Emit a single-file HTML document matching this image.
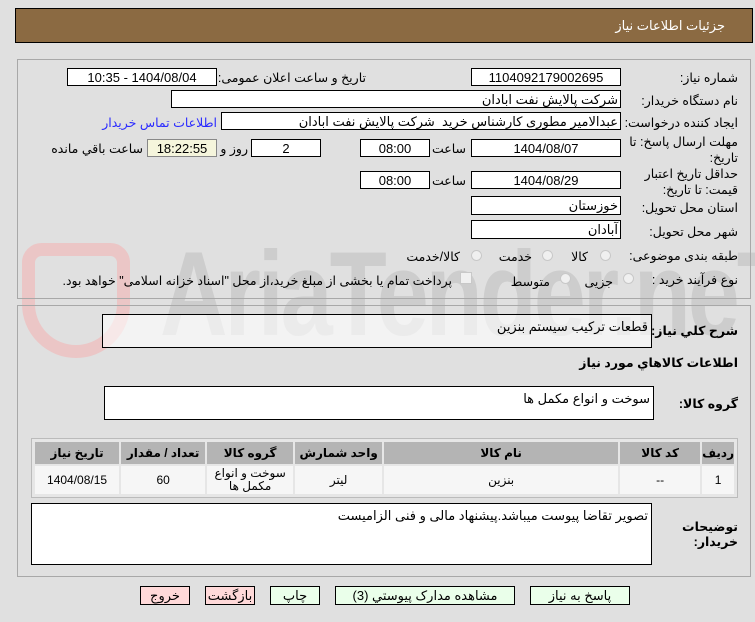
<!DOCTYPE html>
<html><head><meta charset="utf-8"><style>
*{box-sizing:border-box;margin:0;padding:0}
body{width:755px;height:622px;background:#e0e0e0;font-family:"Liberation Sans","DejaVu Sans",sans-serif;font-size:12px;color:#000;position:relative;overflow:hidden;direction:rtl}
.a{position:absolute;white-space:nowrap}
.box{position:absolute;background:#fff;border:1px solid #000;font-size:13px}
.c{text-align:center;line-height:17px}
.r{text-align:right;padding-right:2px;line-height:17px}
.lbl{position:absolute;font-size:12.5px;white-space:nowrap;text-align:right}
.ta{position:absolute;background:#fff;border:1px solid #000;font-size:13px;text-align:right;padding:4px 3px}
.btn{position:absolute;border:1px solid #000;font-size:13px;text-align:center;line-height:17px;height:19px}
.rad{position:absolute;width:11px;height:11px;border-radius:50%;border:1px solid #c8c8c8;background:#f0f0f0}
th{background:#b4b4b4;font-weight:bold;font-size:12px;height:24px;border:2px solid #e6e6e6}
td{background:#f6f6f6;font-size:12px;text-align:center;border:2px solid #e6e6e6}
</style></head><body>
<div class="a" style="left:0;top:225px;width:755px;height:140px;overflow:hidden">
<div class="a" style="left:160px;top:0;font-size:120px;font-weight:bold;color:#cdcdcd;direction:ltr;letter-spacing:-4px;transform:scaleX(0.78);transform-origin:left">AriaTender.neT</div>
<div class="a" style="left:22px;top:18px;width:108px;height:115px;border:13px solid #ebc6c6;border-radius:20px 20px 55px 55px"></div>
</div>

<div class="a" style="left:15px;top:8px;width:738px;height:35px;background:#8b6a42;border:1px solid #000"></div>
<div class="a" style="right:30px;top:18px;color:#fff;font-size:13px">جزئیات اطلاعات نیاز</div>

<div class="a" style="left:17px;top:59px;width:734px;height:240px;border:1px solid #a8a8a8"></div>
<div class="a" style="left:17px;top:305px;width:734px;height:272px;border:1px solid #a8a8a8"></div>

<div class="lbl" style="right:17px;top:70px">شماره نیاز:</div>
<div class="box c" style="left:471px;top:68px;width:150px;height:18px">1104092179002695</div>
<div class="lbl" style="right:389px;top:70px">تاریخ و ساعت اعلان عمومی:</div>
<div class="box c" style="left:67px;top:68px;width:150px;height:18px">1404/08/04 - 10:35</div>

<div class="lbl" style="right:17px;top:93px">نام دستگاه خریدار:</div>
<div class="box r" style="left:171px;top:90px;width:450px;height:18px">شرکت پالایش نفت ابادان</div>

<div class="lbl" style="right:17px;top:115px">ایجاد کننده درخواست:</div>
<div class="box r" style="left:221px;top:112px;width:400px;height:18px">عبدالامیر مطوری کارشناس خرید &nbsp;شرکت پالایش نفت ابادان</div>
<div class="lbl" style="right:538px;top:115px;color:#2a2aff">اطلاعات تماس خریدار</div>

<div class="lbl" style="right:17px;top:134px;line-height:16px">مهلت ارسال پاسخ: تا<br>تاریخ:</div>
<div class="box c" style="left:471px;top:139px;width:150px;height:18px">1404/08/07</div>
<div class="lbl" style="right:289px;top:141px">ساعت</div>
<div class="box c" style="left:360px;top:139px;width:70px;height:18px">08:00</div>
<div class="box c" style="left:251px;top:139px;width:70px;height:18px">2</div>
<div class="lbl" style="right:507px;top:141px">روز و</div>
<div class="box c" style="left:147px;top:139px;width:70px;height:18px;background:#f5f5dc;border-color:#888">18:22:55</div>
<div class="lbl" style="right:612px;top:141px">ساعت باقي مانده</div>

<div class="lbl" style="right:17px;top:166px;line-height:16px">حداقل تاریخ اعتبار<br>قیمت: تا تاریخ:</div>
<div class="box c" style="left:471px;top:171px;width:150px;height:18px">1404/08/29</div>
<div class="lbl" style="right:289px;top:173px">ساعت</div>
<div class="box c" style="left:360px;top:171px;width:70px;height:18px">08:00</div>

<div class="lbl" style="right:17px;top:200px">استان محل تحویل:</div>
<div class="box r" style="left:471px;top:196px;width:150px;height:19px">خوزستان</div>
<div class="lbl" style="right:17px;top:224px">شهر محل تحویل:</div>
<div class="box r" style="left:471px;top:220px;width:150px;height:19px">آبادان</div>

<div class="lbl" style="right:17px;top:248px">طبقه بندی موضوعی:</div>
<div class="rad" style="left:600px;top:250px"></div>
<div class="lbl" style="right:167px;top:249px">کالا</div>
<div class="rad" style="left:542px;top:250px"></div>
<div class="lbl" style="right:223px;top:249px">خدمت</div>
<div class="rad" style="left:471px;top:250px"></div>
<div class="lbl" style="right:295px;top:249px">کالا/خدمت</div>

<div class="lbl" style="right:17px;top:272px">نوع فرآیند خرید :</div>
<div class="rad" style="left:623px;top:273px"></div>
<div class="lbl" style="right:142px;top:274px">جزیی</div>
<div class="rad" style="left:560px;top:273px"></div>
<div class="lbl" style="right:205px;top:274px">متوسط</div>
<div class="a" style="left:460px;top:272px;width:12px;height:12px;border:1px solid #c8c8c8;background:#f0f0f0"></div>
<div class="lbl" style="right:303px;top:273px">پرداخت تمام یا بخشی از مبلغ خرید،از محل "اسناد خزانه اسلامی" خواهد بود.</div>

<div class="lbl" style="right:17px;top:323px;font-weight:bold">شرح کلي نیاز:</div>
<div class="ta" style="left:102px;top:314px;width:550px;height:34px;background:rgba(255,255,255,.6)">قطعات ترکیب سیستم بنزین</div>
<div class="lbl" style="right:17px;top:355px;font-weight:bold">اطلاعات کالاهاي مورد نیاز</div>
<div class="lbl" style="right:17px;top:396px;font-weight:bold">گروه کالا:</div>
<div class="ta" style="left:104px;top:386px;width:550px;height:34px">سوخت و انواع مکمل ها</div>

<div class="a" style="left:31px;top:438px;width:707px;height:60px;border:1px solid #bbb;background:#e6e6e6;padding:1px">
<table style="width:100%;border-collapse:collapse;direction:rtl">
<tr><th style="width:29px">ردیف</th><th style="width:82px">کد کالا</th><th style="width:236px">نام کالا</th><th style="width:89px">واحد شمارش</th><th style="width:88px">گروه کالا</th><th style="width:86px">تعداد / مقدار</th><th>تاریخ نیاز</th></tr>
<tr style="height:30px"><td>1</td><td>--</td><td>بنزین</td><td>لیتر</td><td style="line-height:13px">سوخت و انواع<br>مکمل ها</td><td>60</td><td>1404/08/15</td></tr>
</table></div>

<div class="lbl" style="right:17px;top:520px;font-weight:bold;line-height:15px">توضیحات<br>خریدار:</div>
<div class="ta" style="left:31px;top:503px;width:621px;height:62px">تصویر تقاضا پیوست میباشد.پیشنهاد مالی و فنی الزامیست</div>

<div class="btn" style="left:140px;top:586px;width:50px;background:#ffd9d9">خروج</div>
<div class="btn" style="left:205px;top:586px;width:50px;background:#ffd9d9">بازگشت</div>
<div class="btn" style="left:270px;top:586px;width:50px;background:#eaffea">چاپ</div>
<div class="btn" style="left:335px;top:586px;width:180px;background:#eaffea">مشاهده مدارک پیوستي (3)</div>
<div class="btn" style="left:530px;top:586px;width:100px;background:#eaffea">پاسخ به نیاز</div>
</body></html>
